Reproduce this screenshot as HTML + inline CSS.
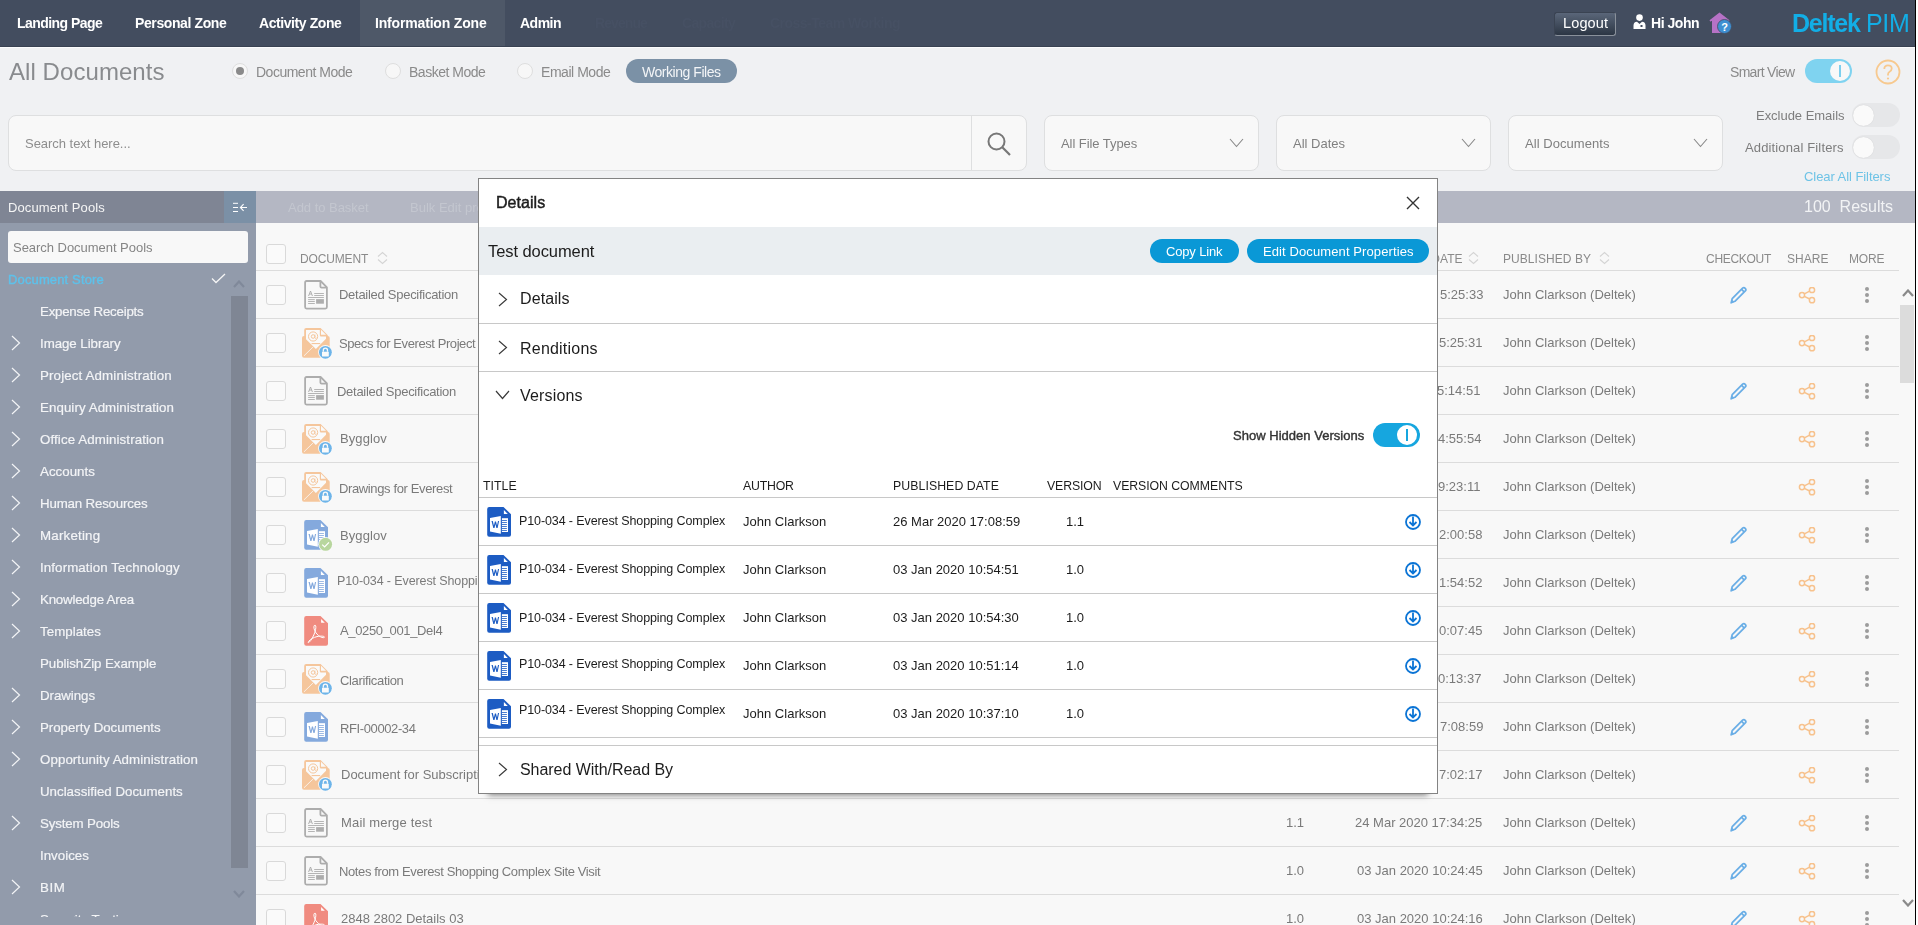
<!DOCTYPE html><html><head><meta charset="utf-8"><title>All Documents</title><style>
html,body{margin:0;padding:0;}
body{width:1918px;height:925px;overflow:hidden;position:relative;background:#fff;font-family:"Liberation Sans", sans-serif;}
#app{position:absolute;left:0;top:0;width:1915px;height:925px;background:#f0f1f3;overflow:hidden;}
.t{position:absolute;white-space:nowrap;line-height:1;will-change:transform;}
</style></head><body><div id="app">
<div style="position:absolute;left:0px;top:0px;width:1915px;height:46px;background:#434d5f;"></div>
<div style="position:absolute;left:360px;top:0px;width:145px;height:46px;background:#4e5868;"></div>
<div style="position:absolute;left:0px;top:46px;width:1915px;height:1px;background:#394252;"></div>
<div style="position:absolute;left:0px;top:47px;width:1915px;height:1px;background:#fbfbfc;"></div>
<div class="t" style="left:16.80px;top:16.15px;font-size:14px;color:#fff;font-weight:bold;letter-spacing:-0.545px;">Landing Page</div>
<div class="t" style="left:135.00px;top:16.15px;font-size:14px;color:#fff;font-weight:bold;letter-spacing:-0.390px;">Personal Zone</div>
<div class="t" style="left:259.00px;top:16.15px;font-size:14px;color:#fff;font-weight:bold;letter-spacing:-0.426px;">Activity Zone</div>
<div class="t" style="left:375.00px;top:16.15px;font-size:14px;color:#fff;font-weight:bold;letter-spacing:-0.169px;">Information Zone</div>
<div class="t" style="left:520.00px;top:16.15px;font-size:14px;color:#fff;font-weight:bold;letter-spacing:-0.500px;">Admin</div>
<div class="t" style="left:595.00px;top:16.15px;font-size:14px;color:#465063;font-weight:bold;letter-spacing:-0.929px;">Revenue</div>
<div class="t" style="left:682.00px;top:16.15px;font-size:14px;color:#465063;font-weight:bold;letter-spacing:-0.653px;">Capacity</div>
<div class="t" style="left:770.00px;top:16.15px;font-size:14px;color:#465063;font-weight:bold;letter-spacing:-0.527px;">Cross-Team Working</div>
<div style="position:absolute;left:1554px;top:12px;width:62px;height:24px;border:1px solid #3a4352;border-right-color:#8a919b;border-bottom-color:#8a919b;border-radius:3px;background:linear-gradient(#5a6679,#2c3644);box-sizing:border-box;"></div>
<div class="t" style="left:1562.70px;top:15.93px;font-size:14.5px;color:#fff;letter-spacing:0.136px;">Logout</div>
<svg style="position:absolute;left:1633px;top:14px;width:13px;height:15px;" width="13" height="15" viewBox="0 0 13 15"><circle cx="6.5" cy="3.6" r="3.3" fill="#fff"/><path d="M0.5,15 L0.5,11.5 Q0.5,8 4,7.7 L6.5,10 L9,7.7 Q12.5,8 12.5,11.5 L12.5,15 Z" fill="#fff"/><path d="M7.5,11 l2,0 l0,2 l-2,0 z" fill="#434d5f"/></svg>
<div class="t" style="left:1651.40px;top:16.35px;font-size:14px;color:#fff;font-weight:bold;letter-spacing:-0.463px;">Hi John</div>
<svg style="position:absolute;left:1709px;top:12px;width:24px;height:23px;" width="24" height="23" viewBox="0 0 24 23"><path d="M1,9 L10.5,1.5 L20,9 L18,9 L18,21 L3,21 L3,9 Z" fill="#b672c6"/><path d="M1,9 L10.5,1.5 L20,9" fill="none" stroke="#b672c6" stroke-width="1.6"/><circle cx="15.5" cy="14.5" r="7" fill="#3e8fd2" stroke="#434d5f" stroke-width="0.8"/><text x="15.5" y="19" font-family="Liberation Sans" font-weight="bold" font-size="11" fill="#fff" text-anchor="middle">?</text></svg>
<div class="t" style="left:1792.00px;top:11.34px;font-size:25px;color:#12aee6;font-weight:bold;letter-spacing:-1.227px;">Deltek</div>
<div class="t" style="left:1866.00px;top:11.34px;font-size:25px;color:#12aee6;letter-spacing:-0.310px;">PIM</div>
<div class="t" style="left:8.75px;top:59.68px;font-size:24px;color:#898b8e;letter-spacing:0.065px;">All Documents</div>
<div style="position:absolute;left:232px;top:63px;width:16px;height:16px;border-radius:50%;background:#f7f7f7;border:1px solid #dedede;box-sizing:border-box;"></div><div style="position:absolute;left:236px;top:67px;width:8px;height:8px;border-radius:50%;background:#8a8a8a;"></div>
<div style="position:absolute;left:385px;top:63px;width:16px;height:16px;border-radius:50%;background:#f7f7f7;border:1px solid #dedede;box-sizing:border-box;"></div>
<div style="position:absolute;left:517px;top:63px;width:16px;height:16px;border-radius:50%;background:#f7f7f7;border:1px solid #dedede;box-sizing:border-box;"></div>
<div class="t" style="left:256.00px;top:64.75px;font-size:14px;color:#8a8a8a;letter-spacing:-0.494px;">Document Mode</div>
<div class="t" style="left:409.00px;top:64.75px;font-size:14px;color:#8a8a8a;letter-spacing:-0.492px;">Basket Mode</div>
<div class="t" style="left:541.00px;top:64.75px;font-size:14px;color:#8a8a8a;letter-spacing:-0.459px;">Email Mode</div>
<div style="position:absolute;left:626px;top:59px;width:111px;height:24px;border-radius:12px;background:#7b91a6;"></div>
<div class="t" style="left:642.00px;top:64.75px;font-size:14px;color:#f3f5f7;letter-spacing:-0.462px;">Working Files</div>
<div class="t" style="left:1730.00px;top:64.65px;font-size:14px;color:#8a8a8a;letter-spacing:-0.690px;">Smart View</div>
<div style="position:absolute;left:1805px;top:59px;width:47px;height:24px;border-radius:12px;background:#7fd3f0;"></div>
<div style="position:absolute;left:1830px;top:61px;width:20px;height:20px;border-radius:50%;background:#f8f8f8;"></div>
<div style="position:absolute;left:1839.2px;top:65px;width:1.8px;height:12px;background:#7ccfee;"></div>
<svg style="position:absolute;left:1875px;top:59px;width:26px;height:26px;" width="26" height="26" viewBox="0 0 26 26"><circle cx="13" cy="13" r="11.5" fill="none" stroke="#f7c98f" stroke-width="1.8"/><path d="M9.3,10 Q9.3,6.3 13,6.3 Q16.7,6.3 16.7,9.6 Q16.7,11.6 14.6,12.7 Q13,13.6 13,15.6 L13,16.5" fill="none" stroke="#f7c98f" stroke-width="1.8"/><circle cx="13" cy="19.5" r="1.1" fill="#f7c98f"/></svg>
<div style="position:absolute;left:8px;top:115px;width:1019px;height:56px;border:1px solid #dedfe0;border-radius:8px;background:#f8f8f8;box-sizing:border-box;"></div>
<div style="position:absolute;left:971px;top:116px;width:1px;height:54px;background:#dedfe0;"></div>
<div class="t" style="left:25.00px;top:137.00px;font-size:13px;color:#8e8e8e;letter-spacing:-0.034px;">Search text here...</div>
<svg style="position:absolute;left:986px;top:131px;width:26px;height:26px;" width="26" height="26" viewBox="0 0 26 26"><circle cx="10.5" cy="10.5" r="8" fill="none" stroke="#777" stroke-width="2"/><path d="M16.3,16.3 L24,24" stroke="#777" stroke-width="2.2"/></svg>
<div style="position:absolute;left:1044px;top:115px;width:215px;height:56px;border:1px solid #dedfe0;border-radius:8px;background:#f8f8f8;box-sizing:border-box;"></div>
<div class="t" style="left:1061.00px;top:137.00px;font-size:13px;color:#808080;letter-spacing:-0.062px;">All File Types</div>
<svg style="position:absolute;left:1228.5px;top:138.3px;width:15px;height:10px;" width="15" height="10" viewBox="0 0 15 10"><path d="M1,1 L7.5,8.5 L14,1" fill="none" stroke="#888" stroke-width="1.1"/></svg>
<div style="position:absolute;left:1276px;top:115px;width:215px;height:56px;border:1px solid #dedfe0;border-radius:8px;background:#f8f8f8;box-sizing:border-box;"></div>
<div class="t" style="left:1293.00px;top:137.00px;font-size:13px;color:#808080;">All Dates</div>
<svg style="position:absolute;left:1460.5px;top:138.3px;width:15px;height:10px;" width="15" height="10" viewBox="0 0 15 10"><path d="M1,1 L7.5,8.5 L14,1" fill="none" stroke="#888" stroke-width="1.1"/></svg>
<div style="position:absolute;left:1508px;top:115px;width:215px;height:56px;border:1px solid #dedfe0;border-radius:8px;background:#f8f8f8;box-sizing:border-box;"></div>
<div class="t" style="left:1525.00px;top:137.00px;font-size:13px;color:#808080;letter-spacing:0.058px;">All Documents</div>
<svg style="position:absolute;left:1692.5px;top:138.3px;width:15px;height:10px;" width="15" height="10" viewBox="0 0 15 10"><path d="M1,1 L7.5,8.5 L14,1" fill="none" stroke="#888" stroke-width="1.1"/></svg>
<div class="t" style="left:1755.60px;top:109.00px;font-size:13px;color:#7d7d7d;letter-spacing:-0.028px;">Exclude Emails</div>
<div style="position:absolute;left:1852px;top:103px;width:48px;height:24px;border-radius:12px;background:#e6e7e9;"></div>
<div style="position:absolute;left:1853px;top:104.5px;width:21px;height:21px;border-radius:50%;background:#fafafa;box-shadow:0 0 1px rgba(0,0,0,0.15);"></div>
<div class="t" style="left:1744.50px;top:141.00px;font-size:13px;color:#7d7d7d;letter-spacing:0.141px;">Additional Filters</div>
<div style="position:absolute;left:1852px;top:135px;width:48px;height:24px;border-radius:12px;background:#e6e7e9;"></div>
<div style="position:absolute;left:1853px;top:136.5px;width:21px;height:21px;border-radius:50%;background:#fafafa;box-shadow:0 0 1px rgba(0,0,0,0.15);"></div>
<div class="t" style="left:1804.00px;top:169.50px;font-size:13px;color:#6ec3e6;letter-spacing:-0.064px;">Clear All Filters</div>
<div style="position:absolute;left:0px;top:191px;width:256px;height:734px;background:#929bab;"></div>
<div style="position:absolute;left:0px;top:191px;width:224px;height:32px;background:#7f8594;"></div>
<div style="position:absolute;left:224px;top:191px;width:32px;height:32px;background:#7b90a6;"></div>
<div class="t" style="left:8.20px;top:201.00px;font-size:13px;color:#f5f5f5;letter-spacing:0.102px;">Document Pools</div>
<svg style="position:absolute;left:232px;top:200px;width:17px;height:14px;" width="17" height="14" viewBox="0 0 17 14"><g fill="#fff"><rect x="1" y="2.8" width="5" height="1"/><rect x="1" y="7" width="5" height="1"/><rect x="1" y="11" width="5" height="1"/></g><path d="M8.5,7.5 L15,7.5 M11.6,4.2 L8.4,7.5 L11.6,10.8" fill="none" stroke="#fff" stroke-width="1.1"/></svg>
<div style="position:absolute;left:8px;top:231px;width:240px;height:32px;background:#f8f8f8;border-radius:3px;"></div>
<div class="t" style="left:13.40px;top:241.00px;font-size:13px;color:#858585;letter-spacing:-0.034px;">Search Document Pools</div>
<div class="t" style="left:8.20px;top:272.70px;font-size:13px;color:#5ec1ea;letter-spacing:0.138px;-webkit-text-stroke:0.4px #5ec1ea;">Document Store</div>
<svg style="position:absolute;left:211px;top:273px;width:15px;height:11px;" width="15" height="11" viewBox="0 0 15 11"><path d="M1,5.5 L5,9.5 L14,1" fill="none" stroke="#f5f5f5" stroke-width="1.3"/></svg>
<div style="position:absolute;left:231px;top:296px;width:17px;height:572px;background:#7f8694;"></div>
<svg style="position:absolute;left:233px;top:280px;width:12px;height:8px;" width="12" height="8" viewBox="0 0 12 8"><path d="M1,7 L6,1.5 L11,7" fill="none" stroke="#80899a" stroke-width="2.2"/></svg>
<svg style="position:absolute;left:233px;top:890px;width:12px;height:8px;" width="12" height="8" viewBox="0 0 12 8"><path d="M1,1 L6.0,6.5 L11,1" fill="none" stroke="#80899a" stroke-width="2.2"/></svg>
<div class="t" style="left:40.30px;top:305.04px;font-size:13.3px;color:#f3f4f6;letter-spacing:-0.235px;-webkit-text-stroke:0.2px #f3f4f6;">Expense Receipts</div>
<div class="t" style="left:40.30px;top:337.04px;font-size:13.3px;color:#f3f4f6;letter-spacing:-0.054px;-webkit-text-stroke:0.2px #f3f4f6;">Image Library</div>
<svg style="position:absolute;left:11px;top:335.3px;width:10px;height:16px;" width="10" height="16" viewBox="0 0 10 16"><path d="M1,1 L8.5,8.0 L1,15" fill="none" stroke="#f3f4f6" stroke-width="1.2"/></svg>
<div class="t" style="left:40.30px;top:369.04px;font-size:13.3px;color:#f3f4f6;letter-spacing:0.146px;-webkit-text-stroke:0.2px #f3f4f6;">Project Administration</div>
<svg style="position:absolute;left:11px;top:367.3px;width:10px;height:16px;" width="10" height="16" viewBox="0 0 10 16"><path d="M1,1 L8.5,8.0 L1,15" fill="none" stroke="#f3f4f6" stroke-width="1.2"/></svg>
<div class="t" style="left:40.30px;top:401.04px;font-size:13.3px;color:#f3f4f6;letter-spacing:0.079px;-webkit-text-stroke:0.2px #f3f4f6;">Enquiry Administration</div>
<svg style="position:absolute;left:11px;top:399.3px;width:10px;height:16px;" width="10" height="16" viewBox="0 0 10 16"><path d="M1,1 L8.5,8.0 L1,15" fill="none" stroke="#f3f4f6" stroke-width="1.2"/></svg>
<div class="t" style="left:40.30px;top:433.04px;font-size:13.3px;color:#f3f4f6;letter-spacing:0.113px;-webkit-text-stroke:0.2px #f3f4f6;">Office Administration</div>
<svg style="position:absolute;left:11px;top:431.3px;width:10px;height:16px;" width="10" height="16" viewBox="0 0 10 16"><path d="M1,1 L8.5,8.0 L1,15" fill="none" stroke="#f3f4f6" stroke-width="1.2"/></svg>
<div class="t" style="left:40.30px;top:465.04px;font-size:13.3px;color:#f3f4f6;letter-spacing:0.022px;-webkit-text-stroke:0.2px #f3f4f6;">Accounts</div>
<svg style="position:absolute;left:11px;top:463.3px;width:10px;height:16px;" width="10" height="16" viewBox="0 0 10 16"><path d="M1,1 L8.5,8.0 L1,15" fill="none" stroke="#f3f4f6" stroke-width="1.2"/></svg>
<div class="t" style="left:40.30px;top:497.04px;font-size:13.3px;color:#f3f4f6;letter-spacing:-0.176px;-webkit-text-stroke:0.2px #f3f4f6;">Human Resources</div>
<svg style="position:absolute;left:11px;top:495.3px;width:10px;height:16px;" width="10" height="16" viewBox="0 0 10 16"><path d="M1,1 L8.5,8.0 L1,15" fill="none" stroke="#f3f4f6" stroke-width="1.2"/></svg>
<div class="t" style="left:40.30px;top:529.04px;font-size:13.3px;color:#f3f4f6;letter-spacing:0.214px;-webkit-text-stroke:0.2px #f3f4f6;">Marketing</div>
<svg style="position:absolute;left:11px;top:527.3px;width:10px;height:16px;" width="10" height="16" viewBox="0 0 10 16"><path d="M1,1 L8.5,8.0 L1,15" fill="none" stroke="#f3f4f6" stroke-width="1.2"/></svg>
<div class="t" style="left:40.30px;top:561.04px;font-size:13.3px;color:#f3f4f6;letter-spacing:0.113px;-webkit-text-stroke:0.2px #f3f4f6;">Information Technology</div>
<svg style="position:absolute;left:11px;top:559.3px;width:10px;height:16px;" width="10" height="16" viewBox="0 0 10 16"><path d="M1,1 L8.5,8.0 L1,15" fill="none" stroke="#f3f4f6" stroke-width="1.2"/></svg>
<div class="t" style="left:40.30px;top:593.04px;font-size:13.3px;color:#f3f4f6;letter-spacing:-0.214px;-webkit-text-stroke:0.2px #f3f4f6;">Knowledge Area</div>
<svg style="position:absolute;left:11px;top:591.3px;width:10px;height:16px;" width="10" height="16" viewBox="0 0 10 16"><path d="M1,1 L8.5,8.0 L1,15" fill="none" stroke="#f3f4f6" stroke-width="1.2"/></svg>
<div class="t" style="left:40.30px;top:625.04px;font-size:13.3px;color:#f3f4f6;letter-spacing:0.043px;-webkit-text-stroke:0.2px #f3f4f6;">Templates</div>
<svg style="position:absolute;left:11px;top:623.3px;width:10px;height:16px;" width="10" height="16" viewBox="0 0 10 16"><path d="M1,1 L8.5,8.0 L1,15" fill="none" stroke="#f3f4f6" stroke-width="1.2"/></svg>
<div class="t" style="left:40.30px;top:657.04px;font-size:13.3px;color:#f3f4f6;letter-spacing:-0.066px;-webkit-text-stroke:0.2px #f3f4f6;">PublishZip Example</div>
<div class="t" style="left:40.30px;top:689.04px;font-size:13.3px;color:#f3f4f6;letter-spacing:-0.053px;-webkit-text-stroke:0.2px #f3f4f6;">Drawings</div>
<svg style="position:absolute;left:11px;top:687.3px;width:10px;height:16px;" width="10" height="16" viewBox="0 0 10 16"><path d="M1,1 L8.5,8.0 L1,15" fill="none" stroke="#f3f4f6" stroke-width="1.2"/></svg>
<div class="t" style="left:40.30px;top:721.04px;font-size:13.3px;color:#f3f4f6;letter-spacing:-0.032px;-webkit-text-stroke:0.2px #f3f4f6;">Property Documents</div>
<svg style="position:absolute;left:11px;top:719.3px;width:10px;height:16px;" width="10" height="16" viewBox="0 0 10 16"><path d="M1,1 L8.5,8.0 L1,15" fill="none" stroke="#f3f4f6" stroke-width="1.2"/></svg>
<div class="t" style="left:40.30px;top:753.04px;font-size:13.3px;color:#f3f4f6;letter-spacing:0.081px;-webkit-text-stroke:0.2px #f3f4f6;">Opportunity Administration</div>
<svg style="position:absolute;left:11px;top:751.3px;width:10px;height:16px;" width="10" height="16" viewBox="0 0 10 16"><path d="M1,1 L8.5,8.0 L1,15" fill="none" stroke="#f3f4f6" stroke-width="1.2"/></svg>
<div class="t" style="left:40.30px;top:785.04px;font-size:13.3px;color:#f3f4f6;letter-spacing:0.006px;-webkit-text-stroke:0.2px #f3f4f6;">Unclassified Documents</div>
<div class="t" style="left:40.30px;top:817.04px;font-size:13.3px;color:#f3f4f6;letter-spacing:-0.140px;-webkit-text-stroke:0.2px #f3f4f6;">System Pools</div>
<svg style="position:absolute;left:11px;top:815.3px;width:10px;height:16px;" width="10" height="16" viewBox="0 0 10 16"><path d="M1,1 L8.5,8.0 L1,15" fill="none" stroke="#f3f4f6" stroke-width="1.2"/></svg>
<div class="t" style="left:40.30px;top:849.04px;font-size:13.3px;color:#f3f4f6;letter-spacing:0.010px;-webkit-text-stroke:0.2px #f3f4f6;">Invoices</div>
<div class="t" style="left:40.30px;top:881.04px;font-size:13.3px;color:#f3f4f6;letter-spacing:0.618px;-webkit-text-stroke:0.2px #f3f4f6;">BIM</div>
<svg style="position:absolute;left:11px;top:879.3px;width:10px;height:16px;" width="10" height="16" viewBox="0 0 10 16"><path d="M1,1 L8.5,8.0 L1,15" fill="none" stroke="#f3f4f6" stroke-width="1.2"/></svg>
<div class="t" style="left:40.30px;top:913.04px;font-size:13.3px;color:#f3f4f6;-webkit-text-stroke:0.2px #f3f4f6;">Security Testing</div>
<div style="position:absolute;left:0px;top:917px;width:230px;height:8px;background:#929bab;"></div>
<div style="position:absolute;left:256px;top:191px;width:1659px;height:734px;background:#f8f8f8;"></div>
<div style="position:absolute;left:256px;top:191px;width:1659px;height:32px;background:#b4b7c3;"></div>
<div class="t" style="left:288.00px;top:201.00px;font-size:13px;color:#c3c6cf;letter-spacing:-0.027px;">Add to Basket</div>
<div class="t" style="left:410.00px;top:201.00px;font-size:13px;color:#c3c6cf;">Bulk Edit properties</div>
<div class="t" style="left:1803.50px;top:199.16px;font-size:16px;color:#f2f3f5;letter-spacing:0.006px;">100&nbsp; Results</div>
<div style="position:absolute;left:266px;top:244px;width:20px;height:20px;border:1px solid #d9d9d9;border-radius:3px;box-sizing:border-box;background:#fafafa;"></div>
<div class="t" style="left:300.00px;top:252.84px;font-size:12px;color:#8a8a8a;letter-spacing:-0.143px;">DOCUMENT</div>
<svg style="position:absolute;left:377px;top:251px;width:11px;height:14px;" width="11" height="14" viewBox="0 0 11 14"><path d="M1,5.5 L5.5,1.5 L10,5.5 M1,8.5 L5.5,12.5 L10,8.5" fill="none" stroke="#d4d4d4" stroke-width="1.1"/></svg>
<div class="t" style="left:1285.00px;top:252.84px;font-size:12px;color:#8a8a8a;">VERSION</div>
<div class="t" style="left:1356.00px;top:252.84px;font-size:12px;color:#8a8a8a;left:auto;right:453px;">PUBLISHED DATE</div>
<svg style="position:absolute;left:1468px;top:251px;width:11px;height:14px;" width="11" height="14" viewBox="0 0 11 14"><path d="M1,5.5 L5.5,1.5 L10,5.5 M1,8.5 L5.5,12.5 L10,8.5" fill="none" stroke="#d4d4d4" stroke-width="1.1"/></svg>
<div class="t" style="left:1503.40px;top:252.84px;font-size:12px;color:#8a8a8a;letter-spacing:0.058px;">PUBLISHED BY</div>
<svg style="position:absolute;left:1599px;top:251px;width:11px;height:14px;" width="11" height="14" viewBox="0 0 11 14"><path d="M1,5.5 L5.5,1.5 L10,5.5 M1,8.5 L5.5,12.5 L10,8.5" fill="none" stroke="#d4d4d4" stroke-width="1.1"/></svg>
<div class="t" style="left:1706.00px;top:252.84px;font-size:12px;color:#8a8a8a;letter-spacing:-0.287px;">CHECKOUT</div>
<div class="t" style="left:1786.50px;top:252.84px;font-size:12px;color:#8a8a8a;letter-spacing:0.040px;">SHARE</div>
<div class="t" style="left:1849.40px;top:252.84px;font-size:12px;color:#8a8a8a;letter-spacing:-0.132px;">MORE</div>
<div style="position:absolute;left:256px;top:270px;width:1643px;height:1px;background:#dcdcdc;"></div>
<div style="position:absolute;left:266px;top:285px;width:20px;height:20px;border:1px solid #d9d9d9;border-radius:3px;box-sizing:border-box;background:#fafafa;"></div>
<svg style="position:absolute;left:296px;top:276px;width:40px;height:40px;" width="40" height="40" viewBox="0 0 40 40"><g fill="none" stroke="#adadad" stroke-width="1.8" stroke-linejoin="round"><path d="M9.1,6.5 Q9.1,5 10.6,5 L24.6,5 L30.9,11.3 L30.9,31.1 Q30.9,32.6 29.4,32.6 L10.6,32.6 Q9.1,32.6 9.1,31.1 Z"/><path d="M24.4,5.2 L24.4,10.5 Q24.4,11.7 25.6,11.7 L30.8,11.7"/></g><g fill="#adadad"><path d="M12.1,19.9 L14,14.9 L15,14.9 L16.9,19.9 L15.9,19.9 L15.4,18.5 L13.6,18.5 L13.1,19.9 Z M13.9,17.6 L15.1,17.6 L14.5,15.9 Z"/><rect x="18.2" y="17.1" width="9.7" height="0.9"/><rect x="18.2" y="19.1" width="9.7" height="0.9"/><rect x="12.1" y="21" width="15.8" height="0.9"/><rect x="12.1" y="23.2" width="6.7" height="0.9"/><rect x="12.1" y="25.1" width="6.7" height="0.9"/><rect x="12.1" y="27.1" width="6.7" height="0.9"/><rect x="20.1" y="23.1" width="7.8" height="4.6"/></g></svg>
<div class="t" style="left:339.00px;top:288.30px;font-size:13px;color:#7a7a7a;letter-spacing:-0.276px;">Detailed Specification</div>
<div class="t" style="left:1286.00px;top:288.30px;font-size:13px;color:#7a7a7a;">1.0</div>
<div class="t" style="left:1356.00px;top:288.30px;font-size:13px;color:#7a7a7a;left:auto;right:431.8px;">5:25:33</div>
<div class="t" style="left:1503.00px;top:288.30px;font-size:13px;color:#7a7a7a;letter-spacing:0.024px;">John Clarkson (Deltek)</div>
<svg style="position:absolute;left:1730px;top:286px;width:18px;height:18px;" width="18" height="18" viewBox="0 0 18 18"><path d="M1.2,16.8 L2.2,12.6 L12.6,2.2 Q13.9,1 15.2,2.3 Q16.5,3.6 15.3,4.9 L4.9,15.3 Z" fill="none" stroke="#6aaee6" stroke-width="1.75" stroke-linejoin="round"/><path d="M11.6,3.4 L14.1,5.9" stroke="#6aaee6" stroke-width="1.6"/><path d="M1.2,16.8 L1.9,13.6 L4.3,16 Z" fill="#6aaee6"/></svg>
<svg style="position:absolute;left:1798px;top:287px;width:18px;height:17px;" width="18" height="17" viewBox="0 0 18 17"><g fill="none" stroke="#f7c28d" stroke-width="1.5"><circle cx="4" cy="8.1" r="2.6"/><circle cx="14" cy="3" r="2.6"/><circle cx="14" cy="13.2" r="2.6"/><path d="M6.3,6.9 L11.7,4.2 M6.3,9.3 L11.7,12"/></g></svg>
<svg style="position:absolute;left:1863px;top:286px;width:8px;height:18px;" width="8" height="18" viewBox="0 0 8 18"><g fill="#9c9c9c"><circle cx="4" cy="3" r="2"/><circle cx="4" cy="9" r="2"/><circle cx="4" cy="15" r="2"/></g></svg>
<div style="position:absolute;left:256px;top:318px;width:1643px;height:1px;background:#dcdcdc;"></div>
<div style="position:absolute;left:266px;top:333px;width:20px;height:20px;border:1px solid #d9d9d9;border-radius:3px;box-sizing:border-box;background:#fafafa;"></div>
<svg style="position:absolute;left:296px;top:324px;width:40px;height:40px;" width="40" height="40" viewBox="0 0 40 40"><rect x="6" y="12" width="27.7" height="21.7" rx="2" fill="#f5c69c"/><path d="M8.2,6 Q8.2,4.1 10.1,4.1 L24.6,4.1 L31.8,11.3 L31.8,16 L19.9,26.5 L8.2,16 Z" fill="#f5c69c"/><path d="M10,6 L23.8,6 L23.8,11.2 Q23.8,12.4 25,12.4 L30,12.4 L30,14.8 L19.9,24.9 L10,15.2 Z" fill="#fafafa"/><path d="M25,5.8 L30,10.8 L25,10.8 Z" fill="#fafafa"/><circle cx="17.1" cy="12.5" r="4.6" fill="none" stroke="#f5c69c" stroke-width="1"/><circle cx="17.1" cy="12.5" r="1.8" fill="none" stroke="#f5c69c" stroke-width="1"/><path d="M18.9,10.5 L18.9,13.8 Q19.3,15 20.6,14" fill="none" stroke="#f5c69c" stroke-width="0.9"/><rect x="15.6" y="19" width="8.6" height="1.1" fill="#f5c69c"/><path d="M8,31.8 L16.9,23.1" stroke="#fafafa" stroke-width="0.8"/><circle cx="29.4" cy="28.3" r="7.2" fill="#fafafa"/><circle cx="29.4" cy="28.3" r="6.4" fill="#6db4e9"/><rect x="26" y="27.7" width="6.8" height="4.7" fill="#fafafa" rx="0.4"/><path d="M27.3,27.8 L27.3,26.4 Q27.3,24.2 29.4,24.2 Q31.5,24.2 31.5,26.4 L31.5,27.8" fill="none" stroke="#fafafa" stroke-width="1.3"/></svg>
<div class="t" style="left:339.00px;top:336.60px;font-size:13px;color:#7a7a7a;letter-spacing:-0.419px;">Specs for Everest Project</div>
<div class="t" style="left:1286.00px;top:336.30px;font-size:13px;color:#7a7a7a;">1.0</div>
<div class="t" style="left:1356.00px;top:336.30px;font-size:13px;color:#7a7a7a;left:auto;right:432.3px;">5:25:31</div>
<div class="t" style="left:1503.00px;top:336.30px;font-size:13px;color:#7a7a7a;letter-spacing:0.024px;">John Clarkson (Deltek)</div>
<svg style="position:absolute;left:1798px;top:335px;width:18px;height:17px;" width="18" height="17" viewBox="0 0 18 17"><g fill="none" stroke="#f7c28d" stroke-width="1.5"><circle cx="4" cy="8.1" r="2.6"/><circle cx="14" cy="3" r="2.6"/><circle cx="14" cy="13.2" r="2.6"/><path d="M6.3,6.9 L11.7,4.2 M6.3,9.3 L11.7,12"/></g></svg>
<svg style="position:absolute;left:1863px;top:334px;width:8px;height:18px;" width="8" height="18" viewBox="0 0 8 18"><g fill="#9c9c9c"><circle cx="4" cy="3" r="2"/><circle cx="4" cy="9" r="2"/><circle cx="4" cy="15" r="2"/></g></svg>
<div style="position:absolute;left:256px;top:366px;width:1643px;height:1px;background:#dcdcdc;"></div>
<div style="position:absolute;left:266px;top:381px;width:20px;height:20px;border:1px solid #d9d9d9;border-radius:3px;box-sizing:border-box;background:#fafafa;"></div>
<svg style="position:absolute;left:296px;top:372px;width:40px;height:40px;" width="40" height="40" viewBox="0 0 40 40"><g fill="none" stroke="#adadad" stroke-width="1.8" stroke-linejoin="round"><path d="M9.1,6.5 Q9.1,5 10.6,5 L24.6,5 L30.9,11.3 L30.9,31.1 Q30.9,32.6 29.4,32.6 L10.6,32.6 Q9.1,32.6 9.1,31.1 Z"/><path d="M24.4,5.2 L24.4,10.5 Q24.4,11.7 25.6,11.7 L30.8,11.7"/></g><g fill="#adadad"><path d="M12.1,19.9 L14,14.9 L15,14.9 L16.9,19.9 L15.9,19.9 L15.4,18.5 L13.6,18.5 L13.1,19.9 Z M13.9,17.6 L15.1,17.6 L14.5,15.9 Z"/><rect x="18.2" y="17.1" width="9.7" height="0.9"/><rect x="18.2" y="19.1" width="9.7" height="0.9"/><rect x="12.1" y="21" width="15.8" height="0.9"/><rect x="12.1" y="23.2" width="6.7" height="0.9"/><rect x="12.1" y="25.1" width="6.7" height="0.9"/><rect x="12.1" y="27.1" width="6.7" height="0.9"/><rect x="20.1" y="23.1" width="7.8" height="4.6"/></g></svg>
<div class="t" style="left:337.20px;top:385.00px;font-size:13px;color:#7a7a7a;letter-spacing:-0.276px;">Detailed Specification</div>
<div class="t" style="left:1286.00px;top:384.30px;font-size:13px;color:#7a7a7a;">1.0</div>
<div class="t" style="left:1356.00px;top:384.30px;font-size:13px;color:#7a7a7a;left:auto;right:434.8px;">5:14:51</div>
<div class="t" style="left:1503.00px;top:384.30px;font-size:13px;color:#7a7a7a;letter-spacing:0.024px;">John Clarkson (Deltek)</div>
<svg style="position:absolute;left:1730px;top:382px;width:18px;height:18px;" width="18" height="18" viewBox="0 0 18 18"><path d="M1.2,16.8 L2.2,12.6 L12.6,2.2 Q13.9,1 15.2,2.3 Q16.5,3.6 15.3,4.9 L4.9,15.3 Z" fill="none" stroke="#6aaee6" stroke-width="1.75" stroke-linejoin="round"/><path d="M11.6,3.4 L14.1,5.9" stroke="#6aaee6" stroke-width="1.6"/><path d="M1.2,16.8 L1.9,13.6 L4.3,16 Z" fill="#6aaee6"/></svg>
<svg style="position:absolute;left:1798px;top:383px;width:18px;height:17px;" width="18" height="17" viewBox="0 0 18 17"><g fill="none" stroke="#f7c28d" stroke-width="1.5"><circle cx="4" cy="8.1" r="2.6"/><circle cx="14" cy="3" r="2.6"/><circle cx="14" cy="13.2" r="2.6"/><path d="M6.3,6.9 L11.7,4.2 M6.3,9.3 L11.7,12"/></g></svg>
<svg style="position:absolute;left:1863px;top:382px;width:8px;height:18px;" width="8" height="18" viewBox="0 0 8 18"><g fill="#9c9c9c"><circle cx="4" cy="3" r="2"/><circle cx="4" cy="9" r="2"/><circle cx="4" cy="15" r="2"/></g></svg>
<div style="position:absolute;left:256px;top:414px;width:1643px;height:1px;background:#dcdcdc;"></div>
<div style="position:absolute;left:266px;top:429px;width:20px;height:20px;border:1px solid #d9d9d9;border-radius:3px;box-sizing:border-box;background:#fafafa;"></div>
<svg style="position:absolute;left:296px;top:420px;width:40px;height:40px;" width="40" height="40" viewBox="0 0 40 40"><rect x="6" y="12" width="27.7" height="21.7" rx="2" fill="#f5c69c"/><path d="M8.2,6 Q8.2,4.1 10.1,4.1 L24.6,4.1 L31.8,11.3 L31.8,16 L19.9,26.5 L8.2,16 Z" fill="#f5c69c"/><path d="M10,6 L23.8,6 L23.8,11.2 Q23.8,12.4 25,12.4 L30,12.4 L30,14.8 L19.9,24.9 L10,15.2 Z" fill="#fafafa"/><path d="M25,5.8 L30,10.8 L25,10.8 Z" fill="#fafafa"/><circle cx="17.1" cy="12.5" r="4.6" fill="none" stroke="#f5c69c" stroke-width="1"/><circle cx="17.1" cy="12.5" r="1.8" fill="none" stroke="#f5c69c" stroke-width="1"/><path d="M18.9,10.5 L18.9,13.8 Q19.3,15 20.6,14" fill="none" stroke="#f5c69c" stroke-width="0.9"/><rect x="15.6" y="19" width="8.6" height="1.1" fill="#f5c69c"/><path d="M8,31.8 L16.9,23.1" stroke="#fafafa" stroke-width="0.8"/><circle cx="29.4" cy="28.3" r="7.2" fill="#fafafa"/><circle cx="29.4" cy="28.3" r="6.4" fill="#6db4e9"/><rect x="26" y="27.7" width="6.8" height="4.7" fill="#fafafa" rx="0.4"/><path d="M27.3,27.8 L27.3,26.4 Q27.3,24.2 29.4,24.2 Q31.5,24.2 31.5,26.4 L31.5,27.8" fill="none" stroke="#fafafa" stroke-width="1.3"/></svg>
<div class="t" style="left:340.30px;top:432.00px;font-size:13px;color:#7a7a7a;letter-spacing:0.075px;">Bygglov</div>
<div class="t" style="left:1286.00px;top:432.30px;font-size:13px;color:#7a7a7a;">1.0</div>
<div class="t" style="left:1356.00px;top:432.30px;font-size:13px;color:#7a7a7a;left:auto;right:433.3px;">4:55:54</div>
<div class="t" style="left:1503.00px;top:432.30px;font-size:13px;color:#7a7a7a;letter-spacing:0.024px;">John Clarkson (Deltek)</div>
<svg style="position:absolute;left:1798px;top:431px;width:18px;height:17px;" width="18" height="17" viewBox="0 0 18 17"><g fill="none" stroke="#f7c28d" stroke-width="1.5"><circle cx="4" cy="8.1" r="2.6"/><circle cx="14" cy="3" r="2.6"/><circle cx="14" cy="13.2" r="2.6"/><path d="M6.3,6.9 L11.7,4.2 M6.3,9.3 L11.7,12"/></g></svg>
<svg style="position:absolute;left:1863px;top:430px;width:8px;height:18px;" width="8" height="18" viewBox="0 0 8 18"><g fill="#9c9c9c"><circle cx="4" cy="3" r="2"/><circle cx="4" cy="9" r="2"/><circle cx="4" cy="15" r="2"/></g></svg>
<div style="position:absolute;left:256px;top:462px;width:1643px;height:1px;background:#dcdcdc;"></div>
<div style="position:absolute;left:266px;top:477px;width:20px;height:20px;border:1px solid #d9d9d9;border-radius:3px;box-sizing:border-box;background:#fafafa;"></div>
<svg style="position:absolute;left:296px;top:468px;width:40px;height:40px;" width="40" height="40" viewBox="0 0 40 40"><rect x="6" y="12" width="27.7" height="21.7" rx="2" fill="#f5c69c"/><path d="M8.2,6 Q8.2,4.1 10.1,4.1 L24.6,4.1 L31.8,11.3 L31.8,16 L19.9,26.5 L8.2,16 Z" fill="#f5c69c"/><path d="M10,6 L23.8,6 L23.8,11.2 Q23.8,12.4 25,12.4 L30,12.4 L30,14.8 L19.9,24.9 L10,15.2 Z" fill="#fafafa"/><path d="M25,5.8 L30,10.8 L25,10.8 Z" fill="#fafafa"/><circle cx="17.1" cy="12.5" r="4.6" fill="none" stroke="#f5c69c" stroke-width="1"/><circle cx="17.1" cy="12.5" r="1.8" fill="none" stroke="#f5c69c" stroke-width="1"/><path d="M18.9,10.5 L18.9,13.8 Q19.3,15 20.6,14" fill="none" stroke="#f5c69c" stroke-width="0.9"/><rect x="15.6" y="19" width="8.6" height="1.1" fill="#f5c69c"/><path d="M8,31.8 L16.9,23.1" stroke="#fafafa" stroke-width="0.8"/><circle cx="29.4" cy="28.3" r="7.2" fill="#fafafa"/><circle cx="29.4" cy="28.3" r="6.4" fill="#6db4e9"/><rect x="26" y="27.7" width="6.8" height="4.7" fill="#fafafa" rx="0.4"/><path d="M27.3,27.8 L27.3,26.4 Q27.3,24.2 29.4,24.2 Q31.5,24.2 31.5,26.4 L31.5,27.8" fill="none" stroke="#fafafa" stroke-width="1.3"/></svg>
<div class="t" style="left:339.20px;top:481.70px;font-size:13px;color:#7a7a7a;letter-spacing:-0.370px;">Drawings for Everest</div>
<div class="t" style="left:1286.00px;top:480.30px;font-size:13px;color:#7a7a7a;">1.0</div>
<div class="t" style="left:1356.00px;top:480.30px;font-size:13px;color:#7a7a7a;left:auto;right:434.8px;">9:23:11</div>
<div class="t" style="left:1503.00px;top:480.30px;font-size:13px;color:#7a7a7a;letter-spacing:0.024px;">John Clarkson (Deltek)</div>
<svg style="position:absolute;left:1798px;top:479px;width:18px;height:17px;" width="18" height="17" viewBox="0 0 18 17"><g fill="none" stroke="#f7c28d" stroke-width="1.5"><circle cx="4" cy="8.1" r="2.6"/><circle cx="14" cy="3" r="2.6"/><circle cx="14" cy="13.2" r="2.6"/><path d="M6.3,6.9 L11.7,4.2 M6.3,9.3 L11.7,12"/></g></svg>
<svg style="position:absolute;left:1863px;top:478px;width:8px;height:18px;" width="8" height="18" viewBox="0 0 8 18"><g fill="#9c9c9c"><circle cx="4" cy="3" r="2"/><circle cx="4" cy="9" r="2"/><circle cx="4" cy="15" r="2"/></g></svg>
<div style="position:absolute;left:256px;top:510px;width:1643px;height:1px;background:#dcdcdc;"></div>
<div style="position:absolute;left:266px;top:525px;width:20px;height:20px;border:1px solid #d9d9d9;border-radius:3px;box-sizing:border-box;background:#fafafa;"></div>
<svg style="position:absolute;left:296px;top:516px;width:40px;height:40px;" width="40" height="40" viewBox="0 0 40 40"><path d="M8.2,6.1 Q8.2,4.1 10.2,4.1 L24.5,4.1 L32,11.3 L32,31.7 Q32,33.7 30,33.7 L10.2,33.7 Q8.2,33.7 8.2,31.7 Z" fill="#84a9dd"/><path d="M24.9,6.9 L28.8,11 L24.9,11 Z" fill="#fff"/><path d="M11,15.1 L21.8,13 L21.8,30.7 L11,28.5 Z" fill="#fff"/><path d="M12.5,17.9 L13.8,17.9 L14.9,22.6 L15.9,18.6 L17,18.6 L18,22.6 L19,17.9 L20.1,17.9 L18.6,24.9 L17.4,24.9 L16.45,20.9 L15.5,24.9 L14.3,24.9 Z" fill="#84a9dd"/><rect x="22.9" y="15.2" width="6.1" height="13.8" fill="#fff"/><g fill="#84a9dd"><rect x="22.9" y="17.1" width="5" height="0.8"/><rect x="22.9" y="19.1" width="5" height="0.8"/><rect x="22.9" y="21.1" width="5" height="0.8"/><rect x="22.9" y="23.1" width="5" height="0.8"/><rect x="22.9" y="25.1" width="5" height="0.8"/><rect x="22.9" y="27.1" width="5" height="0.8"/></g><circle cx="29.6" cy="28.3" r="7.3" fill="#fafafa"/><circle cx="29.6" cy="28.3" r="6.5" fill="#b8d69e"/><path d="M26.2,28.6 L28.6,30.9 L33,26.4" fill="none" stroke="#fff" stroke-width="1.3"/></svg>
<div class="t" style="left:340.30px;top:528.50px;font-size:13px;color:#7a7a7a;letter-spacing:0.075px;">Bygglov</div>
<div class="t" style="left:1286.00px;top:528.30px;font-size:13px;color:#7a7a7a;">1.0</div>
<div class="t" style="left:1356.00px;top:528.30px;font-size:13px;color:#7a7a7a;left:auto;right:433.1px;">2:00:58</div>
<div class="t" style="left:1503.00px;top:528.30px;font-size:13px;color:#7a7a7a;letter-spacing:0.024px;">John Clarkson (Deltek)</div>
<svg style="position:absolute;left:1730px;top:526px;width:18px;height:18px;" width="18" height="18" viewBox="0 0 18 18"><path d="M1.2,16.8 L2.2,12.6 L12.6,2.2 Q13.9,1 15.2,2.3 Q16.5,3.6 15.3,4.9 L4.9,15.3 Z" fill="none" stroke="#6aaee6" stroke-width="1.75" stroke-linejoin="round"/><path d="M11.6,3.4 L14.1,5.9" stroke="#6aaee6" stroke-width="1.6"/><path d="M1.2,16.8 L1.9,13.6 L4.3,16 Z" fill="#6aaee6"/></svg>
<svg style="position:absolute;left:1798px;top:527px;width:18px;height:17px;" width="18" height="17" viewBox="0 0 18 17"><g fill="none" stroke="#f7c28d" stroke-width="1.5"><circle cx="4" cy="8.1" r="2.6"/><circle cx="14" cy="3" r="2.6"/><circle cx="14" cy="13.2" r="2.6"/><path d="M6.3,6.9 L11.7,4.2 M6.3,9.3 L11.7,12"/></g></svg>
<svg style="position:absolute;left:1863px;top:526px;width:8px;height:18px;" width="8" height="18" viewBox="0 0 8 18"><g fill="#9c9c9c"><circle cx="4" cy="3" r="2"/><circle cx="4" cy="9" r="2"/><circle cx="4" cy="15" r="2"/></g></svg>
<div style="position:absolute;left:256px;top:558px;width:1643px;height:1px;background:#dcdcdc;"></div>
<div style="position:absolute;left:266px;top:573px;width:20px;height:20px;border:1px solid #d9d9d9;border-radius:3px;box-sizing:border-box;background:#fafafa;"></div>
<svg style="position:absolute;left:296px;top:564px;width:40px;height:40px;" width="40" height="40" viewBox="0 0 40 40"><path d="M8.2,6.1 Q8.2,4.1 10.2,4.1 L24.5,4.1 L32,11.3 L32,31.7 Q32,33.7 30,33.7 L10.2,33.7 Q8.2,33.7 8.2,31.7 Z" fill="#84a9dd"/><path d="M24.9,6.9 L28.8,11 L24.9,11 Z" fill="#fff"/><path d="M11,15.1 L21.8,13 L21.8,30.7 L11,28.5 Z" fill="#fff"/><path d="M12.5,17.9 L13.8,17.9 L14.9,22.6 L15.9,18.6 L17,18.6 L18,22.6 L19,17.9 L20.1,17.9 L18.6,24.9 L17.4,24.9 L16.45,20.9 L15.5,24.9 L14.3,24.9 Z" fill="#84a9dd"/><rect x="22.9" y="15.2" width="6.1" height="13.8" fill="#fff"/><g fill="#84a9dd"><rect x="22.9" y="17.1" width="5" height="0.8"/><rect x="22.9" y="19.1" width="5" height="0.8"/><rect x="22.9" y="21.1" width="5" height="0.8"/><rect x="22.9" y="23.1" width="5" height="0.8"/><rect x="22.9" y="25.1" width="5" height="0.8"/><rect x="22.9" y="27.1" width="5" height="0.8"/></g></svg>
<div style="position:absolute;left:256px;top:558px;width:222px;height:48px;overflow:hidden;">
<div class="t" style="left:80.50px;top:16.62px;font-size:12.5px;color:#7a7a7a;letter-spacing:-0.109px;">P10-034 - Everest Shopping Complex</div>
</div>
<div class="t" style="left:1286.00px;top:576.30px;font-size:13px;color:#7a7a7a;">1.1</div>
<div class="t" style="left:1356.00px;top:576.30px;font-size:13px;color:#7a7a7a;left:auto;right:433.1px;">1:54:52</div>
<div class="t" style="left:1503.00px;top:576.30px;font-size:13px;color:#7a7a7a;letter-spacing:0.024px;">John Clarkson (Deltek)</div>
<svg style="position:absolute;left:1730px;top:574px;width:18px;height:18px;" width="18" height="18" viewBox="0 0 18 18"><path d="M1.2,16.8 L2.2,12.6 L12.6,2.2 Q13.9,1 15.2,2.3 Q16.5,3.6 15.3,4.9 L4.9,15.3 Z" fill="none" stroke="#6aaee6" stroke-width="1.75" stroke-linejoin="round"/><path d="M11.6,3.4 L14.1,5.9" stroke="#6aaee6" stroke-width="1.6"/><path d="M1.2,16.8 L1.9,13.6 L4.3,16 Z" fill="#6aaee6"/></svg>
<svg style="position:absolute;left:1798px;top:575px;width:18px;height:17px;" width="18" height="17" viewBox="0 0 18 17"><g fill="none" stroke="#f7c28d" stroke-width="1.5"><circle cx="4" cy="8.1" r="2.6"/><circle cx="14" cy="3" r="2.6"/><circle cx="14" cy="13.2" r="2.6"/><path d="M6.3,6.9 L11.7,4.2 M6.3,9.3 L11.7,12"/></g></svg>
<svg style="position:absolute;left:1863px;top:574px;width:8px;height:18px;" width="8" height="18" viewBox="0 0 8 18"><g fill="#9c9c9c"><circle cx="4" cy="3" r="2"/><circle cx="4" cy="9" r="2"/><circle cx="4" cy="15" r="2"/></g></svg>
<div style="position:absolute;left:256px;top:606px;width:1643px;height:1px;background:#dcdcdc;"></div>
<div style="position:absolute;left:266px;top:621px;width:20px;height:20px;border:1px solid #d9d9d9;border-radius:3px;box-sizing:border-box;background:#fafafa;"></div>
<svg style="position:absolute;left:296px;top:612px;width:40px;height:40px;" width="40" height="40" viewBox="0 0 40 40"><path d="M8.2,6.1 Q8.2,4.1 10.2,4.1 L24.5,4.1 L32,11.3 L32,31.7 Q32,33.7 30,33.7 L10.2,33.7 Q8.2,33.7 8.2,31.7 Z" fill="#f08b80"/><path d="M25.1,6.9 L28.8,10.8 L25.1,10.8 Z" fill="#fff"/><path d="M19,13.2 C17.6,13.2 17.6,15.6 18.6,18.3 C19.4,20.6 21.8,23.6 24.6,24.9 C27,26 28.6,25.9 28.4,25 C28.1,23.9 24.2,23.9 21,24.6 C17.6,25.4 14.6,27 12.6,29.4 C11.6,30.6 12.2,31 13.2,30.2 C15.2,28.6 17.8,23.6 18.9,20.2 C19.9,17 20.4,13.2 19,13.2 Z" fill="none" stroke="#fff" stroke-width="1"/></svg>
<div class="t" style="left:340.40px;top:624.30px;font-size:13px;color:#7a7a7a;letter-spacing:-0.356px;">A_0250_001_Del4</div>
<div class="t" style="left:1286.00px;top:624.30px;font-size:13px;color:#7a7a7a;">1.0</div>
<div class="t" style="left:1356.00px;top:624.30px;font-size:13px;color:#7a7a7a;left:auto;right:433.1px;">0:07:45</div>
<div class="t" style="left:1503.00px;top:624.30px;font-size:13px;color:#7a7a7a;letter-spacing:0.024px;">John Clarkson (Deltek)</div>
<svg style="position:absolute;left:1730px;top:622px;width:18px;height:18px;" width="18" height="18" viewBox="0 0 18 18"><path d="M1.2,16.8 L2.2,12.6 L12.6,2.2 Q13.9,1 15.2,2.3 Q16.5,3.6 15.3,4.9 L4.9,15.3 Z" fill="none" stroke="#6aaee6" stroke-width="1.75" stroke-linejoin="round"/><path d="M11.6,3.4 L14.1,5.9" stroke="#6aaee6" stroke-width="1.6"/><path d="M1.2,16.8 L1.9,13.6 L4.3,16 Z" fill="#6aaee6"/></svg>
<svg style="position:absolute;left:1798px;top:623px;width:18px;height:17px;" width="18" height="17" viewBox="0 0 18 17"><g fill="none" stroke="#f7c28d" stroke-width="1.5"><circle cx="4" cy="8.1" r="2.6"/><circle cx="14" cy="3" r="2.6"/><circle cx="14" cy="13.2" r="2.6"/><path d="M6.3,6.9 L11.7,4.2 M6.3,9.3 L11.7,12"/></g></svg>
<svg style="position:absolute;left:1863px;top:622px;width:8px;height:18px;" width="8" height="18" viewBox="0 0 8 18"><g fill="#9c9c9c"><circle cx="4" cy="3" r="2"/><circle cx="4" cy="9" r="2"/><circle cx="4" cy="15" r="2"/></g></svg>
<div style="position:absolute;left:256px;top:654px;width:1643px;height:1px;background:#dcdcdc;"></div>
<div style="position:absolute;left:266px;top:669px;width:20px;height:20px;border:1px solid #d9d9d9;border-radius:3px;box-sizing:border-box;background:#fafafa;"></div>
<svg style="position:absolute;left:296px;top:660px;width:40px;height:40px;" width="40" height="40" viewBox="0 0 40 40"><rect x="6" y="12" width="27.7" height="21.7" rx="2" fill="#f5c69c"/><path d="M8.2,6 Q8.2,4.1 10.1,4.1 L24.6,4.1 L31.8,11.3 L31.8,16 L19.9,26.5 L8.2,16 Z" fill="#f5c69c"/><path d="M10,6 L23.8,6 L23.8,11.2 Q23.8,12.4 25,12.4 L30,12.4 L30,14.8 L19.9,24.9 L10,15.2 Z" fill="#fafafa"/><path d="M25,5.8 L30,10.8 L25,10.8 Z" fill="#fafafa"/><circle cx="17.1" cy="12.5" r="4.6" fill="none" stroke="#f5c69c" stroke-width="1"/><circle cx="17.1" cy="12.5" r="1.8" fill="none" stroke="#f5c69c" stroke-width="1"/><path d="M18.9,10.5 L18.9,13.8 Q19.3,15 20.6,14" fill="none" stroke="#f5c69c" stroke-width="0.9"/><rect x="15.6" y="19" width="8.6" height="1.1" fill="#f5c69c"/><path d="M8,31.8 L16.9,23.1" stroke="#fafafa" stroke-width="0.8"/><circle cx="29.4" cy="28.3" r="7.2" fill="#fafafa"/><circle cx="29.4" cy="28.3" r="6.4" fill="#6db4e9"/><rect x="26" y="27.7" width="6.8" height="4.7" fill="#fafafa" rx="0.4"/><path d="M27.3,27.8 L27.3,26.4 Q27.3,24.2 29.4,24.2 Q31.5,24.2 31.5,26.4 L31.5,27.8" fill="none" stroke="#fafafa" stroke-width="1.3"/></svg>
<div class="t" style="left:339.60px;top:674.10px;font-size:13px;color:#7a7a7a;letter-spacing:-0.340px;">Clarification</div>
<div class="t" style="left:1286.00px;top:672.30px;font-size:13px;color:#7a7a7a;">1.0</div>
<div class="t" style="left:1356.00px;top:672.30px;font-size:13px;color:#7a7a7a;left:auto;right:433.7px;">0:13:37</div>
<div class="t" style="left:1503.00px;top:672.30px;font-size:13px;color:#7a7a7a;letter-spacing:0.024px;">John Clarkson (Deltek)</div>
<svg style="position:absolute;left:1798px;top:671px;width:18px;height:17px;" width="18" height="17" viewBox="0 0 18 17"><g fill="none" stroke="#f7c28d" stroke-width="1.5"><circle cx="4" cy="8.1" r="2.6"/><circle cx="14" cy="3" r="2.6"/><circle cx="14" cy="13.2" r="2.6"/><path d="M6.3,6.9 L11.7,4.2 M6.3,9.3 L11.7,12"/></g></svg>
<svg style="position:absolute;left:1863px;top:670px;width:8px;height:18px;" width="8" height="18" viewBox="0 0 8 18"><g fill="#9c9c9c"><circle cx="4" cy="3" r="2"/><circle cx="4" cy="9" r="2"/><circle cx="4" cy="15" r="2"/></g></svg>
<div style="position:absolute;left:256px;top:702px;width:1643px;height:1px;background:#dcdcdc;"></div>
<div style="position:absolute;left:266px;top:717px;width:20px;height:20px;border:1px solid #d9d9d9;border-radius:3px;box-sizing:border-box;background:#fafafa;"></div>
<svg style="position:absolute;left:296px;top:708px;width:40px;height:40px;" width="40" height="40" viewBox="0 0 40 40"><path d="M8.2,6.1 Q8.2,4.1 10.2,4.1 L24.5,4.1 L32,11.3 L32,31.7 Q32,33.7 30,33.7 L10.2,33.7 Q8.2,33.7 8.2,31.7 Z" fill="#84a9dd"/><path d="M24.9,6.9 L28.8,11 L24.9,11 Z" fill="#fff"/><path d="M11,15.1 L21.8,13 L21.8,30.7 L11,28.5 Z" fill="#fff"/><path d="M12.5,17.9 L13.8,17.9 L14.9,22.6 L15.9,18.6 L17,18.6 L18,22.6 L19,17.9 L20.1,17.9 L18.6,24.9 L17.4,24.9 L16.45,20.9 L15.5,24.9 L14.3,24.9 Z" fill="#84a9dd"/><rect x="22.9" y="15.2" width="6.1" height="13.8" fill="#fff"/><g fill="#84a9dd"><rect x="22.9" y="17.1" width="5" height="0.8"/><rect x="22.9" y="19.1" width="5" height="0.8"/><rect x="22.9" y="21.1" width="5" height="0.8"/><rect x="22.9" y="23.1" width="5" height="0.8"/><rect x="22.9" y="25.1" width="5" height="0.8"/><rect x="22.9" y="27.1" width="5" height="0.8"/></g></svg>
<div class="t" style="left:339.60px;top:722.10px;font-size:13px;color:#7a7a7a;letter-spacing:-0.389px;">RFI-00002-34</div>
<div class="t" style="left:1286.00px;top:720.30px;font-size:13px;color:#7a7a7a;">1.0</div>
<div class="t" style="left:1356.00px;top:720.30px;font-size:13px;color:#7a7a7a;left:auto;right:431.8px;">7:08:59</div>
<div class="t" style="left:1503.00px;top:720.30px;font-size:13px;color:#7a7a7a;letter-spacing:0.024px;">John Clarkson (Deltek)</div>
<svg style="position:absolute;left:1730px;top:718px;width:18px;height:18px;" width="18" height="18" viewBox="0 0 18 18"><path d="M1.2,16.8 L2.2,12.6 L12.6,2.2 Q13.9,1 15.2,2.3 Q16.5,3.6 15.3,4.9 L4.9,15.3 Z" fill="none" stroke="#6aaee6" stroke-width="1.75" stroke-linejoin="round"/><path d="M11.6,3.4 L14.1,5.9" stroke="#6aaee6" stroke-width="1.6"/><path d="M1.2,16.8 L1.9,13.6 L4.3,16 Z" fill="#6aaee6"/></svg>
<svg style="position:absolute;left:1798px;top:719px;width:18px;height:17px;" width="18" height="17" viewBox="0 0 18 17"><g fill="none" stroke="#f7c28d" stroke-width="1.5"><circle cx="4" cy="8.1" r="2.6"/><circle cx="14" cy="3" r="2.6"/><circle cx="14" cy="13.2" r="2.6"/><path d="M6.3,6.9 L11.7,4.2 M6.3,9.3 L11.7,12"/></g></svg>
<svg style="position:absolute;left:1863px;top:718px;width:8px;height:18px;" width="8" height="18" viewBox="0 0 8 18"><g fill="#9c9c9c"><circle cx="4" cy="3" r="2"/><circle cx="4" cy="9" r="2"/><circle cx="4" cy="15" r="2"/></g></svg>
<div style="position:absolute;left:256px;top:750px;width:1643px;height:1px;background:#dcdcdc;"></div>
<div style="position:absolute;left:266px;top:765px;width:20px;height:20px;border:1px solid #d9d9d9;border-radius:3px;box-sizing:border-box;background:#fafafa;"></div>
<svg style="position:absolute;left:296px;top:756px;width:40px;height:40px;" width="40" height="40" viewBox="0 0 40 40"><rect x="6" y="12" width="27.7" height="21.7" rx="2" fill="#f5c69c"/><path d="M8.2,6 Q8.2,4.1 10.1,4.1 L24.6,4.1 L31.8,11.3 L31.8,16 L19.9,26.5 L8.2,16 Z" fill="#f5c69c"/><path d="M10,6 L23.8,6 L23.8,11.2 Q23.8,12.4 25,12.4 L30,12.4 L30,14.8 L19.9,24.9 L10,15.2 Z" fill="#fafafa"/><path d="M25,5.8 L30,10.8 L25,10.8 Z" fill="#fafafa"/><circle cx="17.1" cy="12.5" r="4.6" fill="none" stroke="#f5c69c" stroke-width="1"/><circle cx="17.1" cy="12.5" r="1.8" fill="none" stroke="#f5c69c" stroke-width="1"/><path d="M18.9,10.5 L18.9,13.8 Q19.3,15 20.6,14" fill="none" stroke="#f5c69c" stroke-width="0.9"/><rect x="15.6" y="19" width="8.6" height="1.1" fill="#f5c69c"/><path d="M8,31.8 L16.9,23.1" stroke="#fafafa" stroke-width="0.8"/><circle cx="29.4" cy="28.3" r="7.2" fill="#fafafa"/><circle cx="29.4" cy="28.3" r="6.4" fill="#6db4e9"/><rect x="26" y="27.7" width="6.8" height="4.7" fill="#fafafa" rx="0.4"/><path d="M27.3,27.8 L27.3,26.4 Q27.3,24.2 29.4,24.2 Q31.5,24.2 31.5,26.4 L31.5,27.8" fill="none" stroke="#fafafa" stroke-width="1.3"/></svg>
<div style="position:absolute;left:256px;top:750px;width:222px;height:48px;overflow:hidden;">
<div class="t" style="left:84.90px;top:18.30px;font-size:13px;color:#7a7a7a;">Document for Subscription</div>
</div>
<div class="t" style="left:1286.00px;top:768.30px;font-size:13px;color:#7a7a7a;">1.0</div>
<div class="t" style="left:1356.00px;top:768.30px;font-size:13px;color:#7a7a7a;left:auto;right:432.3px;">7:02:17</div>
<div class="t" style="left:1503.00px;top:768.30px;font-size:13px;color:#7a7a7a;letter-spacing:0.024px;">John Clarkson (Deltek)</div>
<svg style="position:absolute;left:1798px;top:767px;width:18px;height:17px;" width="18" height="17" viewBox="0 0 18 17"><g fill="none" stroke="#f7c28d" stroke-width="1.5"><circle cx="4" cy="8.1" r="2.6"/><circle cx="14" cy="3" r="2.6"/><circle cx="14" cy="13.2" r="2.6"/><path d="M6.3,6.9 L11.7,4.2 M6.3,9.3 L11.7,12"/></g></svg>
<svg style="position:absolute;left:1863px;top:766px;width:8px;height:18px;" width="8" height="18" viewBox="0 0 8 18"><g fill="#9c9c9c"><circle cx="4" cy="3" r="2"/><circle cx="4" cy="9" r="2"/><circle cx="4" cy="15" r="2"/></g></svg>
<div style="position:absolute;left:256px;top:798px;width:1643px;height:1px;background:#dcdcdc;"></div>
<div style="position:absolute;left:266px;top:813px;width:20px;height:20px;border:1px solid #d9d9d9;border-radius:3px;box-sizing:border-box;background:#fafafa;"></div>
<svg style="position:absolute;left:296px;top:804px;width:40px;height:40px;" width="40" height="40" viewBox="0 0 40 40"><g fill="none" stroke="#adadad" stroke-width="1.8" stroke-linejoin="round"><path d="M9.1,6.5 Q9.1,5 10.6,5 L24.6,5 L30.9,11.3 L30.9,31.1 Q30.9,32.6 29.4,32.6 L10.6,32.6 Q9.1,32.6 9.1,31.1 Z"/><path d="M24.4,5.2 L24.4,10.5 Q24.4,11.7 25.6,11.7 L30.8,11.7"/></g><g fill="#adadad"><path d="M12.1,19.9 L14,14.9 L15,14.9 L16.9,19.9 L15.9,19.9 L15.4,18.5 L13.6,18.5 L13.1,19.9 Z M13.9,17.6 L15.1,17.6 L14.5,15.9 Z"/><rect x="18.2" y="17.1" width="9.7" height="0.9"/><rect x="18.2" y="19.1" width="9.7" height="0.9"/><rect x="12.1" y="21" width="15.8" height="0.9"/><rect x="12.1" y="23.2" width="6.7" height="0.9"/><rect x="12.1" y="25.1" width="6.7" height="0.9"/><rect x="12.1" y="27.1" width="6.7" height="0.9"/><rect x="20.1" y="23.1" width="7.8" height="4.6"/></g></svg>
<div class="t" style="left:340.50px;top:815.70px;font-size:13px;color:#7a7a7a;letter-spacing:0.161px;">Mail merge test</div>
<div class="t" style="left:1286.00px;top:816.30px;font-size:13px;color:#7a7a7a;">1.1</div>
<div class="t" style="left:1356.00px;top:816.30px;font-size:13px;color:#7a7a7a;left:auto;right:432.3px;">24 Mar 2020 17:34:25</div>
<div class="t" style="left:1503.00px;top:816.30px;font-size:13px;color:#7a7a7a;letter-spacing:0.024px;">John Clarkson (Deltek)</div>
<svg style="position:absolute;left:1730px;top:814px;width:18px;height:18px;" width="18" height="18" viewBox="0 0 18 18"><path d="M1.2,16.8 L2.2,12.6 L12.6,2.2 Q13.9,1 15.2,2.3 Q16.5,3.6 15.3,4.9 L4.9,15.3 Z" fill="none" stroke="#6aaee6" stroke-width="1.75" stroke-linejoin="round"/><path d="M11.6,3.4 L14.1,5.9" stroke="#6aaee6" stroke-width="1.6"/><path d="M1.2,16.8 L1.9,13.6 L4.3,16 Z" fill="#6aaee6"/></svg>
<svg style="position:absolute;left:1798px;top:815px;width:18px;height:17px;" width="18" height="17" viewBox="0 0 18 17"><g fill="none" stroke="#f7c28d" stroke-width="1.5"><circle cx="4" cy="8.1" r="2.6"/><circle cx="14" cy="3" r="2.6"/><circle cx="14" cy="13.2" r="2.6"/><path d="M6.3,6.9 L11.7,4.2 M6.3,9.3 L11.7,12"/></g></svg>
<svg style="position:absolute;left:1863px;top:814px;width:8px;height:18px;" width="8" height="18" viewBox="0 0 8 18"><g fill="#9c9c9c"><circle cx="4" cy="3" r="2"/><circle cx="4" cy="9" r="2"/><circle cx="4" cy="15" r="2"/></g></svg>
<div style="position:absolute;left:256px;top:846px;width:1643px;height:1px;background:#dcdcdc;"></div>
<div style="position:absolute;left:266px;top:861px;width:20px;height:20px;border:1px solid #d9d9d9;border-radius:3px;box-sizing:border-box;background:#fafafa;"></div>
<svg style="position:absolute;left:296px;top:852px;width:40px;height:40px;" width="40" height="40" viewBox="0 0 40 40"><g fill="none" stroke="#adadad" stroke-width="1.8" stroke-linejoin="round"><path d="M9.1,6.5 Q9.1,5 10.6,5 L24.6,5 L30.9,11.3 L30.9,31.1 Q30.9,32.6 29.4,32.6 L10.6,32.6 Q9.1,32.6 9.1,31.1 Z"/><path d="M24.4,5.2 L24.4,10.5 Q24.4,11.7 25.6,11.7 L30.8,11.7"/></g><g fill="#adadad"><path d="M12.1,19.9 L14,14.9 L15,14.9 L16.9,19.9 L15.9,19.9 L15.4,18.5 L13.6,18.5 L13.1,19.9 Z M13.9,17.6 L15.1,17.6 L14.5,15.9 Z"/><rect x="18.2" y="17.1" width="9.7" height="0.9"/><rect x="18.2" y="19.1" width="9.7" height="0.9"/><rect x="12.1" y="21" width="15.8" height="0.9"/><rect x="12.1" y="23.2" width="6.7" height="0.9"/><rect x="12.1" y="25.1" width="6.7" height="0.9"/><rect x="12.1" y="27.1" width="6.7" height="0.9"/><rect x="20.1" y="23.1" width="7.8" height="4.6"/></g></svg>
<div class="t" style="left:339.40px;top:865.00px;font-size:13px;color:#7a7a7a;letter-spacing:-0.379px;">Notes from Everest Shopping Complex Site Visit</div>
<div class="t" style="left:1286.00px;top:864.30px;font-size:13px;color:#7a7a7a;">1.0</div>
<div class="t" style="left:1356.00px;top:864.30px;font-size:13px;color:#7a7a7a;left:auto;right:432.3px;">03 Jan 2020 10:24:45</div>
<div class="t" style="left:1503.00px;top:864.30px;font-size:13px;color:#7a7a7a;letter-spacing:0.024px;">John Clarkson (Deltek)</div>
<svg style="position:absolute;left:1730px;top:862px;width:18px;height:18px;" width="18" height="18" viewBox="0 0 18 18"><path d="M1.2,16.8 L2.2,12.6 L12.6,2.2 Q13.9,1 15.2,2.3 Q16.5,3.6 15.3,4.9 L4.9,15.3 Z" fill="none" stroke="#6aaee6" stroke-width="1.75" stroke-linejoin="round"/><path d="M11.6,3.4 L14.1,5.9" stroke="#6aaee6" stroke-width="1.6"/><path d="M1.2,16.8 L1.9,13.6 L4.3,16 Z" fill="#6aaee6"/></svg>
<svg style="position:absolute;left:1798px;top:863px;width:18px;height:17px;" width="18" height="17" viewBox="0 0 18 17"><g fill="none" stroke="#f7c28d" stroke-width="1.5"><circle cx="4" cy="8.1" r="2.6"/><circle cx="14" cy="3" r="2.6"/><circle cx="14" cy="13.2" r="2.6"/><path d="M6.3,6.9 L11.7,4.2 M6.3,9.3 L11.7,12"/></g></svg>
<svg style="position:absolute;left:1863px;top:862px;width:8px;height:18px;" width="8" height="18" viewBox="0 0 8 18"><g fill="#9c9c9c"><circle cx="4" cy="3" r="2"/><circle cx="4" cy="9" r="2"/><circle cx="4" cy="15" r="2"/></g></svg>
<div style="position:absolute;left:256px;top:894px;width:1643px;height:1px;background:#dcdcdc;"></div>
<div style="position:absolute;left:266px;top:909px;width:20px;height:20px;border:1px solid #d9d9d9;border-radius:3px;box-sizing:border-box;background:#fafafa;"></div>
<svg style="position:absolute;left:296px;top:900px;width:40px;height:40px;" width="40" height="40" viewBox="0 0 40 40"><path d="M8.2,6.1 Q8.2,4.1 10.2,4.1 L24.5,4.1 L32,11.3 L32,31.7 Q32,33.7 30,33.7 L10.2,33.7 Q8.2,33.7 8.2,31.7 Z" fill="#f08b80"/><path d="M25.1,6.9 L28.8,10.8 L25.1,10.8 Z" fill="#fff"/><path d="M19,13.2 C17.6,13.2 17.6,15.6 18.6,18.3 C19.4,20.6 21.8,23.6 24.6,24.9 C27,26 28.6,25.9 28.4,25 C28.1,23.9 24.2,23.9 21,24.6 C17.6,25.4 14.6,27 12.6,29.4 C11.6,30.6 12.2,31 13.2,30.2 C15.2,28.6 17.8,23.6 18.9,20.2 C19.9,17 20.4,13.2 19,13.2 Z" fill="none" stroke="#fff" stroke-width="1"/></svg>
<div class="t" style="left:340.50px;top:911.80px;font-size:13px;color:#7a7a7a;letter-spacing:-0.013px;">2848 2802 Details 03</div>
<div class="t" style="left:1286.00px;top:912.30px;font-size:13px;color:#7a7a7a;">1.0</div>
<div class="t" style="left:1356.00px;top:912.30px;font-size:13px;color:#7a7a7a;left:auto;right:432.3px;">03 Jan 2020 10:24:16</div>
<div class="t" style="left:1503.00px;top:912.30px;font-size:13px;color:#7a7a7a;letter-spacing:0.024px;">John Clarkson (Deltek)</div>
<svg style="position:absolute;left:1730px;top:910px;width:18px;height:18px;" width="18" height="18" viewBox="0 0 18 18"><path d="M1.2,16.8 L2.2,12.6 L12.6,2.2 Q13.9,1 15.2,2.3 Q16.5,3.6 15.3,4.9 L4.9,15.3 Z" fill="none" stroke="#6aaee6" stroke-width="1.75" stroke-linejoin="round"/><path d="M11.6,3.4 L14.1,5.9" stroke="#6aaee6" stroke-width="1.6"/><path d="M1.2,16.8 L1.9,13.6 L4.3,16 Z" fill="#6aaee6"/></svg>
<svg style="position:absolute;left:1798px;top:911px;width:18px;height:17px;" width="18" height="17" viewBox="0 0 18 17"><g fill="none" stroke="#f7c28d" stroke-width="1.5"><circle cx="4" cy="8.1" r="2.6"/><circle cx="14" cy="3" r="2.6"/><circle cx="14" cy="13.2" r="2.6"/><path d="M6.3,6.9 L11.7,4.2 M6.3,9.3 L11.7,12"/></g></svg>
<svg style="position:absolute;left:1863px;top:910px;width:8px;height:18px;" width="8" height="18" viewBox="0 0 8 18"><g fill="#9c9c9c"><circle cx="4" cy="3" r="2"/><circle cx="4" cy="9" r="2"/><circle cx="4" cy="15" r="2"/></g></svg>
<div style="position:absolute;left:256px;top:942px;width:1643px;height:1px;background:#dcdcdc;"></div>
<svg style="position:absolute;left:1902px;top:289px;width:12px;height:8px;" width="12" height="8" viewBox="0 0 12 8"><path d="M1,7 L6,1.5 L11,7" fill="none" stroke="#8a8a8a" stroke-width="2.2"/></svg>
<div style="position:absolute;left:1900px;top:305px;width:14px;height:78px;background:#dcdcdc;"></div>
<svg style="position:absolute;left:1902px;top:899px;width:12px;height:8px;" width="12" height="8" viewBox="0 0 12 8"><path d="M1,1 L6.0,6.5 L11,1" fill="none" stroke="#8a8a8a" stroke-width="2.2"/></svg>
<div style="position:absolute;left:478px;top:178px;width:960px;height:616px;background:#fff;border:1px solid #838383;box-sizing:border-box;box-shadow:0 11px 6px -10px rgba(0,0,0,0.5);"></div>
<div class="t" style="left:495.80px;top:195.46px;font-size:16px;color:#1c1c1c;letter-spacing:0.049px;-webkit-text-stroke:0.45px #1c1c1c;">Details</div>
<svg style="position:absolute;left:1406px;top:196px;width:14px;height:14px;" width="14" height="14" viewBox="0 0 14 14"><path d="M1,1 L13,13 M13,1 L1,13" stroke="#333" stroke-width="1.4"/></svg>
<div style="position:absolute;left:479px;top:227px;width:958px;height:48px;background:#eaeef1;"></div>
<div class="t" style="left:487.90px;top:243.03px;font-size:16.5px;color:#1c1c1c;letter-spacing:-0.077px;">Test document</div>
<div style="position:absolute;left:1150px;top:239px;width:89px;height:24px;background:#0a98d6;border-radius:12px;"></div>
<div class="t" style="left:1166.00px;top:245.30px;font-size:13px;color:#fff;letter-spacing:-0.164px;">Copy Link</div>
<div style="position:absolute;left:1247px;top:239px;width:182px;height:24px;background:#0a98d6;border-radius:12px;"></div>
<div class="t" style="left:1263.00px;top:245.30px;font-size:13px;color:#fff;letter-spacing:0.103px;">Edit Document Properties</div>
<svg style="position:absolute;left:498px;top:292px;width:10px;height:15px;" width="10" height="15" viewBox="0 0 10 15"><path d="M1,1 L8.5,7.5 L1,14" fill="none" stroke="#3a3a3a" stroke-width="1.15"/></svg>
<div class="t" style="left:519.50px;top:291.46px;font-size:16px;color:#1c1c1c;letter-spacing:0.099px;">Details</div>
<div style="position:absolute;left:479px;top:323px;width:958px;height:1px;background:#c8c8c8;"></div>
<svg style="position:absolute;left:498px;top:340px;width:10px;height:15px;" width="10" height="15" viewBox="0 0 10 15"><path d="M1,1 L8.5,7.5 L1,14" fill="none" stroke="#3a3a3a" stroke-width="1.15"/></svg>
<div class="t" style="left:519.50px;top:341.06px;font-size:16px;color:#1c1c1c;letter-spacing:0.211px;">Renditions</div>
<div style="position:absolute;left:479px;top:371px;width:958px;height:1px;background:#c8c8c8;"></div>
<svg style="position:absolute;left:495px;top:390px;width:15px;height:10px;" width="15" height="10" viewBox="0 0 15 10"><path d="M1,1 L7.5,8.5 L14,1" fill="none" stroke="#3a3a3a" stroke-width="1.15"/></svg>
<div class="t" style="left:519.50px;top:388.46px;font-size:16px;color:#1c1c1c;letter-spacing:0.162px;">Versions</div>
<div class="t" style="left:1233.00px;top:428.60px;font-size:13px;color:#333;letter-spacing:0.021px;-webkit-text-stroke:0.4px #333;">Show Hidden Versions</div>
<div style="position:absolute;left:1373px;top:423px;width:47px;height:24px;border-radius:12px;background:#16a6df;"></div>
<div style="position:absolute;left:1397px;top:425px;width:20px;height:20px;border-radius:50%;background:#fff;"></div>
<div style="position:absolute;left:1406px;top:429px;width:1.5px;height:12px;background:#16a6df;"></div>
<div class="t" style="left:483.00px;top:479.69px;font-size:12.3px;color:#1c1c1c;letter-spacing:0.055px;">TITLE</div>
<div class="t" style="left:743.00px;top:479.69px;font-size:12.3px;color:#1c1c1c;letter-spacing:-0.208px;">AUTHOR</div>
<div class="t" style="left:893.30px;top:479.69px;font-size:12.3px;color:#1c1c1c;letter-spacing:0.069px;">PUBLISHED DATE</div>
<div class="t" style="left:1047.10px;top:479.69px;font-size:12.3px;color:#1c1c1c;letter-spacing:-0.128px;">VERSION</div>
<div class="t" style="left:1113.40px;top:479.69px;font-size:12.3px;color:#1c1c1c;letter-spacing:-0.059px;">VERSION COMMENTS</div>
<div style="position:absolute;left:479px;top:497px;width:958px;height:1px;background:#c8c8c8;"></div>
<svg style="position:absolute;left:479px;top:503px;width:40px;height:40px;" width="40" height="40" viewBox="0 0 40 40"><path d="M8.2,6.1 Q8.2,4.1 10.2,4.1 L24.5,4.1 L32,11.3 L32,31.7 Q32,33.7 30,33.7 L10.2,33.7 Q8.2,33.7 8.2,31.7 Z" fill="#1d5cc3"/><path d="M24.9,6.9 L28.8,11 L24.9,11 Z" fill="#fff"/><path d="M11,15.1 L21.8,13 L21.8,30.7 L11,28.5 Z" fill="#fff"/><path d="M12.5,17.9 L13.8,17.9 L14.9,22.6 L15.9,18.6 L17,18.6 L18,22.6 L19,17.9 L20.1,17.9 L18.6,24.9 L17.4,24.9 L16.45,20.9 L15.5,24.9 L14.3,24.9 Z" fill="#1d5cc3"/><rect x="22.9" y="15.2" width="6.1" height="13.8" fill="#fff"/><g fill="#1d5cc3"><rect x="22.9" y="17.1" width="5" height="0.8"/><rect x="22.9" y="19.1" width="5" height="0.8"/><rect x="22.9" y="21.1" width="5" height="0.8"/><rect x="22.9" y="23.1" width="5" height="0.8"/><rect x="22.9" y="25.1" width="5" height="0.8"/><rect x="22.9" y="27.1" width="5" height="0.8"/></g></svg>
<div class="t" style="left:519.00px;top:514.62px;font-size:12.5px;color:#1c1c1c;letter-spacing:-0.109px;">P10-034 - Everest Shopping Complex</div>
<div class="t" style="left:743.00px;top:515.20px;font-size:13px;color:#1c1c1c;letter-spacing:0.011px;">John Clarkson</div>
<div class="t" style="left:893.00px;top:515.00px;font-size:13px;color:#1c1c1c;letter-spacing:0.001px;">26 Mar 2020 17:08:59</div>
<div class="t" style="left:1065.80px;top:515.00px;font-size:13px;color:#1c1c1c;">1.1</div>
<svg style="position:absolute;left:1404px;top:513px;width:18px;height:18px;" width="18" height="18" viewBox="0 0 18 18"><g fill="none" stroke="#0b74d5" stroke-width="1.8"><circle cx="9" cy="9" r="7"/><path d="M9,3.5 L9,12.5 M5.5,9 L9,12.5 L12.5,9"/></g></svg>
<div style="position:absolute;left:479px;top:545px;width:958px;height:1px;background:#c8c8c8;"></div>
<svg style="position:absolute;left:479px;top:551px;width:40px;height:40px;" width="40" height="40" viewBox="0 0 40 40"><path d="M8.2,6.1 Q8.2,4.1 10.2,4.1 L24.5,4.1 L32,11.3 L32,31.7 Q32,33.7 30,33.7 L10.2,33.7 Q8.2,33.7 8.2,31.7 Z" fill="#1d5cc3"/><path d="M24.9,6.9 L28.8,11 L24.9,11 Z" fill="#fff"/><path d="M11,15.1 L21.8,13 L21.8,30.7 L11,28.5 Z" fill="#fff"/><path d="M12.5,17.9 L13.8,17.9 L14.9,22.6 L15.9,18.6 L17,18.6 L18,22.6 L19,17.9 L20.1,17.9 L18.6,24.9 L17.4,24.9 L16.45,20.9 L15.5,24.9 L14.3,24.9 Z" fill="#1d5cc3"/><rect x="22.9" y="15.2" width="6.1" height="13.8" fill="#fff"/><g fill="#1d5cc3"><rect x="22.9" y="17.1" width="5" height="0.8"/><rect x="22.9" y="19.1" width="5" height="0.8"/><rect x="22.9" y="21.1" width="5" height="0.8"/><rect x="22.9" y="23.1" width="5" height="0.8"/><rect x="22.9" y="25.1" width="5" height="0.8"/><rect x="22.9" y="27.1" width="5" height="0.8"/></g></svg>
<div class="t" style="left:519.00px;top:563.32px;font-size:12.5px;color:#1c1c1c;letter-spacing:-0.109px;">P10-034 - Everest Shopping Complex</div>
<div class="t" style="left:743.00px;top:563.20px;font-size:13px;color:#1c1c1c;letter-spacing:0.011px;">John Clarkson</div>
<div class="t" style="left:893.00px;top:563.00px;font-size:13px;color:#1c1c1c;">03 Jan 2020 10:54:51</div>
<div class="t" style="left:1065.80px;top:563.00px;font-size:13px;color:#1c1c1c;">1.0</div>
<svg style="position:absolute;left:1404px;top:561px;width:18px;height:18px;" width="18" height="18" viewBox="0 0 18 18"><g fill="none" stroke="#0b74d5" stroke-width="1.8"><circle cx="9" cy="9" r="7"/><path d="M9,3.5 L9,12.5 M5.5,9 L9,12.5 L12.5,9"/></g></svg>
<div style="position:absolute;left:479px;top:593px;width:958px;height:1px;background:#c8c8c8;"></div>
<svg style="position:absolute;left:479px;top:599px;width:40px;height:40px;" width="40" height="40" viewBox="0 0 40 40"><path d="M8.2,6.1 Q8.2,4.1 10.2,4.1 L24.5,4.1 L32,11.3 L32,31.7 Q32,33.7 30,33.7 L10.2,33.7 Q8.2,33.7 8.2,31.7 Z" fill="#1d5cc3"/><path d="M24.9,6.9 L28.8,11 L24.9,11 Z" fill="#fff"/><path d="M11,15.1 L21.8,13 L21.8,30.7 L11,28.5 Z" fill="#fff"/><path d="M12.5,17.9 L13.8,17.9 L14.9,22.6 L15.9,18.6 L17,18.6 L18,22.6 L19,17.9 L20.1,17.9 L18.6,24.9 L17.4,24.9 L16.45,20.9 L15.5,24.9 L14.3,24.9 Z" fill="#1d5cc3"/><rect x="22.9" y="15.2" width="6.1" height="13.8" fill="#fff"/><g fill="#1d5cc3"><rect x="22.9" y="17.1" width="5" height="0.8"/><rect x="22.9" y="19.1" width="5" height="0.8"/><rect x="22.9" y="21.1" width="5" height="0.8"/><rect x="22.9" y="23.1" width="5" height="0.8"/><rect x="22.9" y="25.1" width="5" height="0.8"/><rect x="22.9" y="27.1" width="5" height="0.8"/></g></svg>
<div class="t" style="left:519.00px;top:612.12px;font-size:12.5px;color:#1c1c1c;letter-spacing:-0.109px;">P10-034 - Everest Shopping Complex</div>
<div class="t" style="left:743.00px;top:611.20px;font-size:13px;color:#1c1c1c;letter-spacing:0.011px;">John Clarkson</div>
<div class="t" style="left:893.00px;top:611.00px;font-size:13px;color:#1c1c1c;">03 Jan 2020 10:54:30</div>
<div class="t" style="left:1065.80px;top:611.00px;font-size:13px;color:#1c1c1c;">1.0</div>
<svg style="position:absolute;left:1404px;top:609px;width:18px;height:18px;" width="18" height="18" viewBox="0 0 18 18"><g fill="none" stroke="#0b74d5" stroke-width="1.8"><circle cx="9" cy="9" r="7"/><path d="M9,3.5 L9,12.5 M5.5,9 L9,12.5 L12.5,9"/></g></svg>
<div style="position:absolute;left:479px;top:641px;width:958px;height:1px;background:#c8c8c8;"></div>
<svg style="position:absolute;left:479px;top:647px;width:40px;height:40px;" width="40" height="40" viewBox="0 0 40 40"><path d="M8.2,6.1 Q8.2,4.1 10.2,4.1 L24.5,4.1 L32,11.3 L32,31.7 Q32,33.7 30,33.7 L10.2,33.7 Q8.2,33.7 8.2,31.7 Z" fill="#1d5cc3"/><path d="M24.9,6.9 L28.8,11 L24.9,11 Z" fill="#fff"/><path d="M11,15.1 L21.8,13 L21.8,30.7 L11,28.5 Z" fill="#fff"/><path d="M12.5,17.9 L13.8,17.9 L14.9,22.6 L15.9,18.6 L17,18.6 L18,22.6 L19,17.9 L20.1,17.9 L18.6,24.9 L17.4,24.9 L16.45,20.9 L15.5,24.9 L14.3,24.9 Z" fill="#1d5cc3"/><rect x="22.9" y="15.2" width="6.1" height="13.8" fill="#fff"/><g fill="#1d5cc3"><rect x="22.9" y="17.1" width="5" height="0.8"/><rect x="22.9" y="19.1" width="5" height="0.8"/><rect x="22.9" y="21.1" width="5" height="0.8"/><rect x="22.9" y="23.1" width="5" height="0.8"/><rect x="22.9" y="25.1" width="5" height="0.8"/><rect x="22.9" y="27.1" width="5" height="0.8"/></g></svg>
<div class="t" style="left:519.00px;top:658.02px;font-size:12.5px;color:#1c1c1c;letter-spacing:-0.109px;">P10-034 - Everest Shopping Complex</div>
<div class="t" style="left:743.00px;top:659.20px;font-size:13px;color:#1c1c1c;letter-spacing:0.011px;">John Clarkson</div>
<div class="t" style="left:893.00px;top:659.00px;font-size:13px;color:#1c1c1c;">03 Jan 2020 10:51:14</div>
<div class="t" style="left:1065.80px;top:659.00px;font-size:13px;color:#1c1c1c;">1.0</div>
<svg style="position:absolute;left:1404px;top:657px;width:18px;height:18px;" width="18" height="18" viewBox="0 0 18 18"><g fill="none" stroke="#0b74d5" stroke-width="1.8"><circle cx="9" cy="9" r="7"/><path d="M9,3.5 L9,12.5 M5.5,9 L9,12.5 L12.5,9"/></g></svg>
<div style="position:absolute;left:479px;top:689px;width:958px;height:1px;background:#c8c8c8;"></div>
<svg style="position:absolute;left:479px;top:695px;width:40px;height:40px;" width="40" height="40" viewBox="0 0 40 40"><path d="M8.2,6.1 Q8.2,4.1 10.2,4.1 L24.5,4.1 L32,11.3 L32,31.7 Q32,33.7 30,33.7 L10.2,33.7 Q8.2,33.7 8.2,31.7 Z" fill="#1d5cc3"/><path d="M24.9,6.9 L28.8,11 L24.9,11 Z" fill="#fff"/><path d="M11,15.1 L21.8,13 L21.8,30.7 L11,28.5 Z" fill="#fff"/><path d="M12.5,17.9 L13.8,17.9 L14.9,22.6 L15.9,18.6 L17,18.6 L18,22.6 L19,17.9 L20.1,17.9 L18.6,24.9 L17.4,24.9 L16.45,20.9 L15.5,24.9 L14.3,24.9 Z" fill="#1d5cc3"/><rect x="22.9" y="15.2" width="6.1" height="13.8" fill="#fff"/><g fill="#1d5cc3"><rect x="22.9" y="17.1" width="5" height="0.8"/><rect x="22.9" y="19.1" width="5" height="0.8"/><rect x="22.9" y="21.1" width="5" height="0.8"/><rect x="22.9" y="23.1" width="5" height="0.8"/><rect x="22.9" y="25.1" width="5" height="0.8"/><rect x="22.9" y="27.1" width="5" height="0.8"/></g></svg>
<div class="t" style="left:519.00px;top:704.22px;font-size:12.5px;color:#1c1c1c;letter-spacing:-0.109px;">P10-034 - Everest Shopping Complex</div>
<div class="t" style="left:743.00px;top:707.20px;font-size:13px;color:#1c1c1c;letter-spacing:0.011px;">John Clarkson</div>
<div class="t" style="left:893.00px;top:707.00px;font-size:13px;color:#1c1c1c;">03 Jan 2020 10:37:10</div>
<div class="t" style="left:1065.80px;top:707.00px;font-size:13px;color:#1c1c1c;">1.0</div>
<svg style="position:absolute;left:1404px;top:705px;width:18px;height:18px;" width="18" height="18" viewBox="0 0 18 18"><g fill="none" stroke="#0b74d5" stroke-width="1.8"><circle cx="9" cy="9" r="7"/><path d="M9,3.5 L9,12.5 M5.5,9 L9,12.5 L12.5,9"/></g></svg>
<div style="position:absolute;left:479px;top:737px;width:958px;height:1px;background:#c8c8c8;"></div>
<div style="position:absolute;left:479px;top:745px;width:958px;height:1px;background:#c8c8c8;"></div>
<svg style="position:absolute;left:498px;top:762px;width:10px;height:15px;" width="10" height="15" viewBox="0 0 10 15"><path d="M1,1 L8.5,7.5 L1,14" fill="none" stroke="#3a3a3a" stroke-width="1.15"/></svg>
<div class="t" style="left:519.50px;top:762.46px;font-size:16px;color:#1c1c1c;letter-spacing:-0.047px;">Shared With/Read By</div>
</div>
<div style="position:absolute;left:1915px;top:0px;width:1px;height:925px;background:#000;"></div>
</body></html>
